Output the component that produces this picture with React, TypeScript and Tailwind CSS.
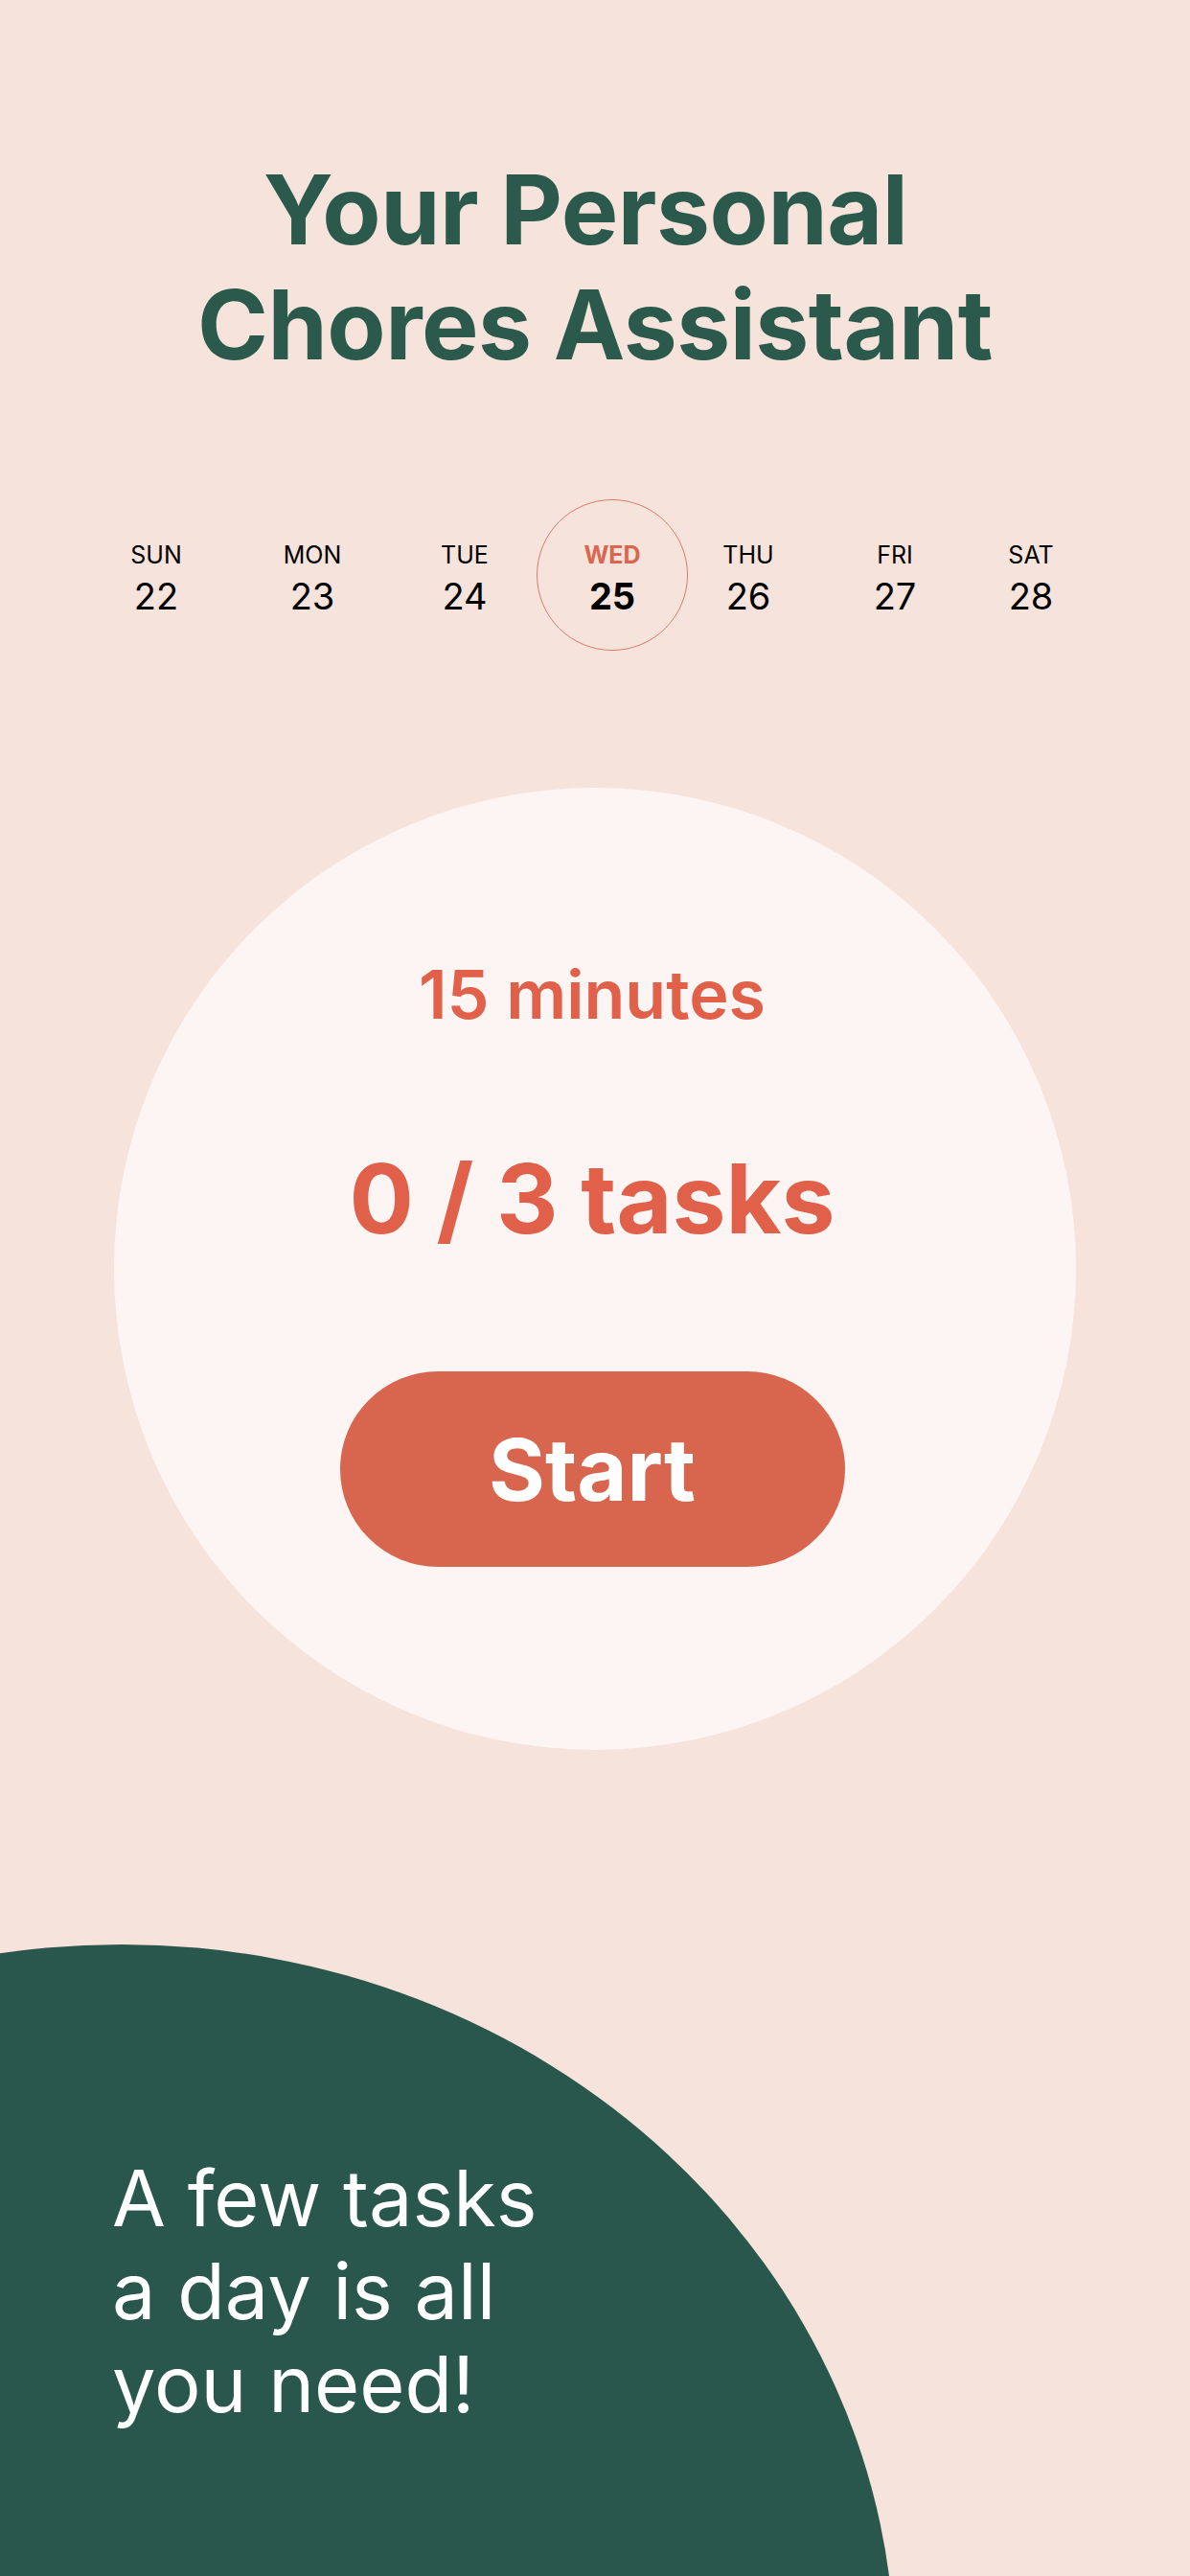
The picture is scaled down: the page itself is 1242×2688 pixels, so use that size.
const days = [
  { label: "SUN", date: 22, w: "w-[160px]" },
  { label: "MON", date: 23, w: "w-[166px]" },
  { label: "TUE", date: 24, w: "w-[152px]" },
  { label: "WED", date: 25, w: "w-[156px]", active: true },
  { label: "THU", date: 26, w: "w-[128px]" },
  { label: "FRI", date: 27, w: "w-[178px]" },
  { label: "SAT", date: 28, w: "w-[106px]" },
];

function DayItem({ label, date, w, active }: { label: string; date: number; w: string; active?: boolean }) {
  return (
    <div className={`relative flex shrink-0 flex-col items-center ${w}`}>
      {active && (
        <div className="absolute left-1/2 top-[calc(50%-4px)] h-[158px] w-[158px] -translate-x-1/2 -translate-y-1/2 rounded-full border-[1.5px] border-[#de7b67]" />
      )}
      <span
        className={`text-[25px] leading-[30px] ${active ? "font-bold text-[#d9664f]" : "text-black"}`}
      >
        {label}
      </span>
      <span className={`mt-[6px] text-[38px] leading-[44px] text-black ${active ? "font-bold" : ""}`}>
        {date}
      </span>
    </div>
  );
}

export default function App() {
  return (
    <div className="relative h-[2688px] overflow-hidden bg-[#f6e3dc] font-[Inter,sans-serif]">
      {/* green blob at the bottom */}
      <div className="absolute left-[-680px] top-[2029px] h-[1500px] w-[1614px] rounded-[50%] bg-[#2a574b]" />

      <div className="relative flex flex-col items-center pt-[159px]">
        <h1 className="text-center text-[100px] font-bold leading-[120px] tracking-[-0.005em] text-[#2b5a4c]">
          <span className="block pr-[20px]">Your Personal</span>
          <span className="block">Chores Assistant</span>
        </h1>

        {/* week strip */}
        <div className="mt-[165px] flex w-full items-center pl-[83px]">
          {days.map((d) => (
            <DayItem key={d.label} {...d} />
          ))}
        </div>

        {/* today card */}
        <div className="mt-[178px] flex h-[1004px] w-[1004px] flex-col items-center rounded-full bg-[#fdf5f4] pr-[6px] pt-[181px]">
          <div className="text-[70px] font-semibold leading-none text-[#e0604a]">15 minutes</div>
          <div className="mt-[128px] text-[100px] font-bold leading-none text-[#e0604a]">0 / 3 tasks</div>
          <button className="mt-[130px] flex h-[204px] w-[527px] items-center justify-center rounded-full bg-[#d8664f] text-[90px] font-bold text-white">
            Start
          </button>
        </div>

        <div className="mt-[420px] w-full px-[117px]">
          <p className="text-[81px] leading-[97px] text-white">
            A few tasks
            <br />
            a day is all
            <br />
            you need!
          </p>
        </div>
      </div>
    </div>
  );
}
